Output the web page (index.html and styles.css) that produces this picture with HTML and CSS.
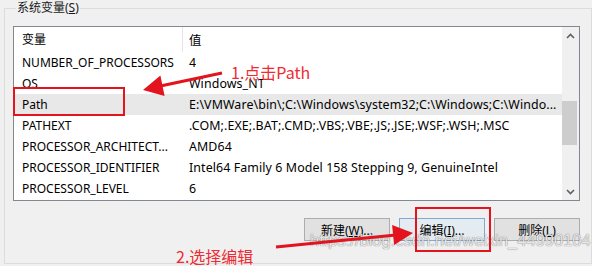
FILE: index.html
```html
<!DOCTYPE html>
<html lang="zh-CN">
<head>
<meta charset="utf-8">
<title>系统变量</title>
<link rel="stylesheet" href="styles.css">
</head>
<body>
<div class="page">
  <fieldset class="group">
    <legend class="group-label">系统变量(<u>S</u>)</legend>
    <div class="listbox">
      <div class="list">
        <div class="row header">
          <div class="col name">变量</div>
          <div class="col value">值</div>
        </div>
        <div class="row"><div class="col name">NUMBER_OF_PROCESSORS</div><div class="col value">4</div></div>
        <div class="row"><div class="col name">OS</div><div class="col value">Windows_NT</div></div>
        <div class="row selected"><div class="col name">Path</div><div class="col value">E:\VMWare\bin\;C:\Windows\system32;C:\Windows;C:\Windo...</div></div>
        <div class="row"><div class="col name">PATHEXT</div><div class="col value">.COM;.EXE;.BAT;.CMD;.VBS;.VBE;.JS;.JSE;.WSF;.WSH;.MSC</div></div>
        <div class="row"><div class="col name">PROCESSOR_ARCHITECT...</div><div class="col value">AMD64</div></div>
        <div class="row"><div class="col name">PROCESSOR_IDENTIFIER</div><div class="col value">Intel64 Family 6 Model 158 Stepping 9, GenuineIntel</div></div>
        <div class="row"><div class="col name">PROCESSOR_LEVEL</div><div class="col value">6</div></div>
      </div>
      <div class="scrollbar">
        <div class="sb-arrow">
          <svg width="9" height="6" viewBox="0 0 9 6"><path d="M1 5 L4.5 1.5 L8 5" fill="none" stroke="#606060" stroke-width="1.6"/></svg>
        </div>
        <div class="sb-track">
          <div class="sb-thumb"></div>
        </div>
        <div class="sb-arrow">
          <svg width="9" height="6" viewBox="0 0 9 6"><path d="M1 1 L4.5 4.5 L8 1" fill="none" stroke="#606060" stroke-width="1.6"/></svg>
        </div>
      </div>
    </div>
    <div class="buttons">
      <button class="btn">新建(<u>W</u>)...</button>
      <button class="btn focused">编辑(<u>I</u>)...</button>
      <button class="btn">删除(<u>L</u>)</button>
    </div>
  </fieldset>

  <div class="note note1">1.点击Path</div>
  <div class="note note2">2.选择编辑</div>
  <div class="watermark">https://blog.csdn.net/weixin_44990104</div>
  <svg class="annot" width="592" height="266" viewBox="0 0 592 266">
    <rect x="14" y="88" width="110" height="27" fill="none" stroke="#e3141d" stroke-width="2"/>
    <rect x="416" y="208" width="74" height="43" fill="none" stroke="#e3141d" stroke-width="2"/>
    <line x1="222" y1="73" x2="158" y2="86.5" stroke="#e3141d" stroke-width="3"/>
    <polygon points="143,90 164.6,96 160.4,75.5" fill="#e3141d"/>
    <line x1="276" y1="247" x2="396" y2="235" stroke="#e3141d" stroke-width="3"/>
    <polygon points="413,233 394.1,245 392.1,225" fill="#e3141d"/>
  </svg>
</div>
</body>
</html>
```

FILE: styles.css
```css
* { box-sizing: border-box; }
html, body {
  margin: 0;
  padding: 0;
  background: #f0f0f0;
}
body {
  width: 592px;
  height: 266px;
  overflow: hidden;
  font-family: "Noto Sans", "Noto Sans CJK SC", sans-serif;
  font-size: 12px;
  color: #000;
}
.page {
  position: relative;
  width: 592px;
  height: 266px;
}
.group {
  margin: 0 0 0 4px;
  padding: 0 0 0 8px;
  width: 588px;
  height: 264px;
  border: 1px solid #dcdcdc;
  display: flex;
  flex-direction: column;
  min-width: 0;
}
.group-label {
  padding: 0 1px;
  margin-left: 3px;
  line-height: 16px;
  font-size: 12px;
  color: #1a1a1a;
}
.group-label u { text-decoration-thickness: 1px; text-underline-offset: 1px; }
.listbox {
  margin-top: 10px;
  width: 567px;
  height: 175px;
  border: 1px solid #828790;
  background: #fff;
  display: flex;
}
.list {
  flex: 1;
  display: flex;
  flex-direction: column;
  overflow: hidden;
}
.row {
  display: flex;
  height: 21px;
  align-items: center;
  white-space: nowrap;
}
.row.header {
  height: 25px;
}
.row.selected {
  background: #e8e8e8;
}
.col.name {
  width: 169px;
  padding-left: 8px;
  overflow: hidden;
}
.header .col.name {
  border-right: 1px solid #e5e5e5;
  height: 25px;
  line-height: 25px;
}
.col.value {
  padding-left: 6px;
  overflow: hidden;
  font-size: 12.4px;
  letter-spacing: 0.1px;
}
.scrollbar {
  width: 17px;
  background: #f0f0f0;
  display: flex;
  flex-direction: column;
}
.sb-arrow {
  height: 17px;
  display: flex;
  align-items: center;
  justify-content: center;
}
.sb-track {
  flex: 1;
  padding-top: 57px;
}
.sb-thumb {
  width: 15px;
  height: 44px;
  background: #cdcdcd;
}
.buttons {
  margin-top: 17px;
  display: flex;
  gap: 9px;
  justify-content: flex-end;
  padding-right: 11px;
}
.btn {
  width: 86px;
  height: 23px;
  padding: 0;
  font-family: "Noto Sans", "Noto Sans CJK SC", sans-serif;
  font-size: 12px;
  color: #000;
  background: #e1e1e1;
  border: 1px solid #adadad;
  border-radius: 0;
}
.btn.focused {
  background: #e4ebf1;
  border-color: #7eaad4;
}
.note {
  position: absolute;
  font-family: "Noto Sans CJK SC", sans-serif;
  font-size: 16px;
  color: #ee2a33;
  line-height: 16px;
}
.note1 { left: 231px; top: 64px; }
.note2 { left: 176px; top: 248px; }
.watermark {
  position: absolute;
  left: 310px;
  top: 231px;
  font-family: "Liberation Sans", Arial, sans-serif;
  font-size: 16.5px;
  color: rgba(255, 255, 255, 0.85);
  text-shadow: 0 0 1px rgba(0, 0, 0, 0.45), 0 0 1px rgba(0, 0, 0, 0.3);
  white-space: nowrap;
}
.annot {
  position: absolute;
  left: 0;
  top: 0;
  pointer-events: none;
}
```
